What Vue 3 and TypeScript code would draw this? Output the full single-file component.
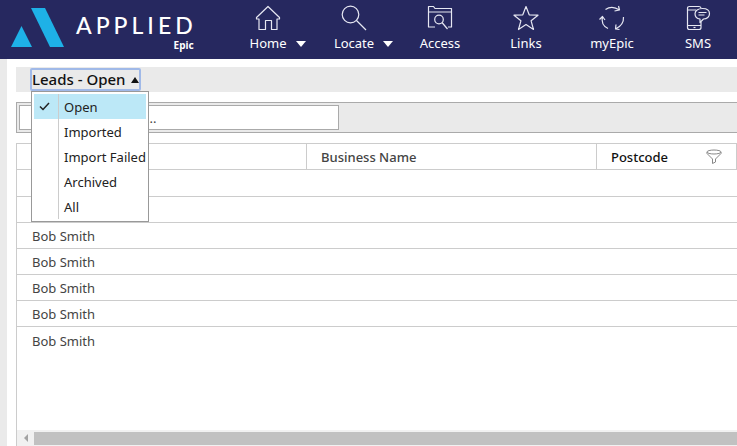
<script setup lang="ts">
import { ref } from 'vue'

interface NavItem {
  label: string
  icon: string
  menu?: boolean
}

interface Lead {
  id: number
  name: string
  business: string
  postcode: string
}

const navItems: NavItem[] = [
  { label: 'Home', icon: 'home', menu: true },
  { label: 'Locate', icon: 'locate', menu: true },
  { label: 'Access', icon: 'access' },
  { label: 'Links', icon: 'links' },
  { label: 'myEpic', icon: 'myepic' },
  { label: 'SMS', icon: 'sms' },
]

const statuses: string[] = ['Open', 'Imported', 'Import Failed', 'Archived', 'All']
const selected = ref('Open')
const menuOpen = ref(true)
const search = ref('')

const names: string[] = ['', '', 'Bob Smith', 'Bob Smith', 'Bob Smith', 'Bob Smith', 'Bob Smith']
const leads = ref<Lead[]>(names.map((name, id) => ({ id, name, business: '', postcode: '' })))

function choose(status: string): void {
  selected.value = status
  menuOpen.value = false
}
</script>

<template>
  <div class="page">
    <header class="topbar">
      <div class="brand">
        <svg class="mark" viewBox="0 0 54 40" aria-hidden="true">
          <path d="M20 0h14l19 39H39z" />
          <path d="M10.500 18L21 39H0z" />
        </svg>
        <div class="wordmark">
          <span class="company">APPLIED</span>
          <span class="product">Epic</span>
        </div>
      </div>
      <nav class="nav">
        <button v-for="item in navItems" :key="item.label" type="button" class="nav-item">
          <svg class="nav-icon" viewBox="0 0 26 26" aria-hidden="true">
            <g v-if="item.icon === 'home'">
              <path d="M1.500 12.500L13 1.500l11.500 11v1.500h-2.500v10.500h-5.500v-9h-6v9H4V14H1.500z" />
            </g>
            <g v-else-if="item.icon === 'locate'">
              <circle cx="9.500" cy="9.500" r="8.300" />
              <path d="M15.500 15.500l9.500 9.500" />
            </g>
            <g v-else-if="item.icon === 'access'">
              <path d="M8 22H1.500V1.500h5l1.500 2h16.500V22H21M1.500 7h23" />
              <circle cx="12" cy="14.500" r="4.300" />
              <path d="M15 17.500l5.500 6.500" />
            </g>
            <g v-else-if="item.icon === 'links'">
              <path d="M13 1.500l3.200 8.300 8.800.400-6.900 5.600 2.400 8.700L13 19.600l-7.500 4.900 2.400-8.700L1 10.200l8.800-.400z" />
            </g>
            <g v-else-if="item.icon === 'myepic'">
              <path d="M6.500 4.500Q13 0 20.500 5M19.500 1l1 4-5 1" />
              <path d="M24.500 12Q25 20 16.500 24M17 19.500l-.5 4.500 4 .5" />
              <path d="M9 23.500Q1.500 20 3.500 11.500M.5 14.500l3-3 2.500 3.500" />
            </g>
            <g v-else>
              <path d="M9.500 1.500h-5q-2 0-2 2v19q0 2 2 2h9.500q2 0 2-2V17M9.500 1.500H14q1.500 0 2 1.500M2.500 5h8.500M2.500 20.500H16" />
              <path d="M17.500 3.500c4.500 0 7 2.300 7 5.200s-2.500 5.300-6 5.300L15 17.500V14c-3-.500-5-2.500-5-5.300 0-2.900 3-5.200 7.500-5.200zM13.500 7.500h8M13.500 10h6" />
              <path d="M8.500 22.500h2" />
            </g>
          </svg>
          <span class="nav-label">
            <span class="nav-text">{{ item.label }}</span>
            <svg v-if="item.menu" class="caret" viewBox="0 0 10 6" aria-hidden="true"><path d="M0 0h10L5 6z" /></svg>
          </span>
        </button>
      </nav>
    </header>

    <main class="content">
      <div class="titlebar">
        <div class="view-picker">
          <button
            type="button"
            class="view-button"
            aria-haspopup="true"
            :aria-expanded="menuOpen"
            @click="menuOpen = !menuOpen"
          >
            Leads - {{ selected }}
            <svg class="up" viewBox="0 0 8 6" aria-hidden="true"><path d="M0 6h8L4 0z" /></svg>
          </button>
          <div v-if="menuOpen" class="menu" role="menu">
            <button
              v-for="status in statuses"
              :key="status"
              type="button"
              role="menuitemradio"
              :aria-checked="status === selected"
              class="menu-item"
              :class="{ active: status === selected }"
              @click="choose(status)"
            >
              <span class="tick">
                <svg v-if="status === selected" viewBox="0 0 11 9" aria-hidden="true"><path d="M1 4.500L4 7.500 10 1" /></svg>
              </span>
              <span class="menu-text">{{ status }}</span>
            </button>
          </div>
        </div>
      </div>

      <div class="filterbar">
        <input v-model="search" class="search" type="text" aria-label="Search leads" placeholder="..." />
      </div>

      <section class="grid">
        <table class="leads">
          <colgroup>
            <col class="wide" />
            <col class="wide" />
            <col class="narrow" />
          </colgroup>
          <thead>
            <tr>
              <th scope="col" aria-label="Name"></th>
              <th scope="col">Business Name</th>
              <th scope="col" class="filtered">
                <div class="th-inner">
                  <span>Postcode</span>
                  <button type="button" class="funnel" aria-label="Filter by postcode">
                    <svg viewBox="0 0 16 16" aria-hidden="true">
                      <ellipse cx="8" cy="3" rx="7" ry="2" />
                      <path d="M1 3v1.500L6.500 10v4.500l3-1.500v-3L15 4.500V3" />
                    </svg>
                  </button>
                </div>
              </th>
            </tr>
          </thead>
          <tbody>
            <tr v-for="lead in leads" :key="lead.id">
              <td>{{ lead.name }}</td>
              <td>{{ lead.business }}</td>
              <td>{{ lead.postcode }}</td>
            </tr>
          </tbody>
        </table>
        <div class="scrollbar">
          <button type="button" class="scroll-left" aria-label="Scroll left">
            <svg viewBox="0 0 4 8" aria-hidden="true"><path d="M4 0v8L0 4z" /></svg>
          </button>
          <div class="thumb"></div>
        </div>
      </section>
    </main>
  </div>
</template>

<style>
body {
  background: #fff;
}
</style>

<style scoped>
.page {
  display: flex;
  flex-direction: column;
  min-height: 100vh;
  overflow: hidden;
  font-family: "Noto Sans", "Open Sans", sans-serif;
  font-size: 13px;
  color: #444;
}

button {
  margin: 0;
  padding: 0;
  border: 0;
  background: none;
  color: inherit;
  font: inherit;
  cursor: pointer;
}

svg {
  display: block;
}

.topbar {
  display: flex;
  height: 59px;
  background: #26285f;
  color: #fff;
}

.brand {
  display: flex;
  flex: 0 0 225px;
  box-sizing: border-box;
  gap: 11px;
  padding: 8px 0 0 11px;
}

.mark {
  width: 54px;
  height: 40px;
  fill: #1eb1e7;
}

.wordmark {
  display: flex;
  flex-direction: column;
  align-items: flex-end;
  padding-top: 4px;
}

.company {
  font-family: Lato, sans-serif;
  font-size: 23px;
  font-weight: 500;
  line-height: 26px;
  letter-spacing: 4px;
}

.product {
  padding-right: 3px;
  font-size: 10px;
  font-weight: 700;
  line-height: 14px;
}

.nav {
  display: grid;
  grid-template-columns: repeat(6, 86px);
}

.nav-item {
  display: flex;
  flex-direction: column;
  align-items: stretch;
  padding-top: 5px;
}

.nav-icon {
  align-self: center;
  width: 26px;
  height: 26px;
  fill: none;
  stroke: #e6e7f2;
  stroke-width: 1.2;
  stroke-linejoin: round;
}

.nav-label {
  display: grid;
  grid-template-columns: 1fr auto 1fr;
  gap: 9px;
  align-items: center;
  line-height: 25px;
}

.nav-text {
  grid-column: 2;
}

.caret {
  width: 10px;
  height: 6px;
  fill: #fff;
}

.content {
  display: flex;
  flex: 1;
  flex-direction: column;
  gap: 10px;
  padding: 8px 0 0 9px;
  border-left: 7px solid #eaeaea;
}

.titlebar {
  display: flex;
  height: 25px;
  padding-left: 14px;
  background: #eaeaea;
}

.view-picker {
  position: relative;
  padding-top: 1px;
}

.view-button {
  display: flex;
  align-items: center;
  gap: 6px;
  height: 23px;
  border: 2px solid #a0b9e8;
  border-radius: 2px;
  color: #111;
  font-size: 15px;
  font-weight: 500;
  line-height: 19px;
  white-space: nowrap;
}

.up {
  width: 8px;
  height: 6px;
  fill: #111;
}

.menu {
  position: absolute;
  top: 24px;
  left: 1px;
  z-index: 2;
  padding: 2px;
  border: 1px solid #999;
  background: #fff;
}

.menu-item {
  display: flex;
  width: 100%;
  height: 25px;
  align-items: flex-start;
  color: #222;
  line-height: 27px;
  text-align: left;
  white-space: nowrap;
}

.menu-item.active {
  background: #bce8f7;
}

.tick {
  box-sizing: border-box;
  width: 25px;
  height: 25px;
  padding: 8px 0 0 5px;
  border-right: 1px solid #ccc;
}

.tick svg {
  width: 11px;
  height: 9px;
  fill: none;
  stroke: #222;
  stroke-width: 1.5;
}

.menu-text {
  padding-left: 5px;
}

.filterbar {
  padding: 2px;
  border: 1px solid #aaa;
  border-right: 0;
  background: #eaeaea;
}

.search {
  display: block;
  box-sizing: border-box;
  width: 320px;
  height: 25px;
  padding: 0 4px 0 126px;
  border: 1px solid #aaa;
  background: #fff;
  color: #444;
  font: inherit;
}

.search::placeholder {
  color: #444;
}

.grid {
  display: flex;
  flex: 1;
  flex-direction: column;
  justify-content: space-between;
  border-top: 1px solid #ccc;
  border-left: 1px solid #ccc;
}

.leads {
  width: 100%;
  border-collapse: separate;
  border-spacing: 0;
  table-layout: fixed;
}

.wide {
  width: 290px;
}

.narrow {
  width: 140px;
}

th,
td {
  box-sizing: border-box;
  height: 26px;
  padding: 1px 14px 0;
  border-bottom: 1px solid #ccc;
  font-weight: 400;
  line-height: 24px;
  text-align: left;
}

th {
  border-right: 1px solid #ccc;
  font-weight: 500;
}

th.filtered {
  color: #111;
}

td:first-child {
  padding-left: 15px;
}

tbody tr:first-child td {
  height: 27px;
}

tbody tr:last-child td {
  border-bottom: 0;
}

.th-inner {
  display: flex;
  align-items: center;
  justify-content: space-between;
}

.funnel svg {
  width: 16px;
  height: 16px;
  fill: none;
  stroke: #888;
}

.scrollbar {
  display: flex;
  height: 16px;
  background: #f1f1f1;
}

.scroll-left {
  display: flex;
  flex: 0 0 17px;
  align-items: center;
  justify-content: center;
}

.scroll-left svg {
  width: 4px;
  height: 8px;
  fill: #a3a3a3;
}

.thumb {
  flex: 1;
  margin: 2px 0 1px;
  background: #c1c1c1;
}
</style>
